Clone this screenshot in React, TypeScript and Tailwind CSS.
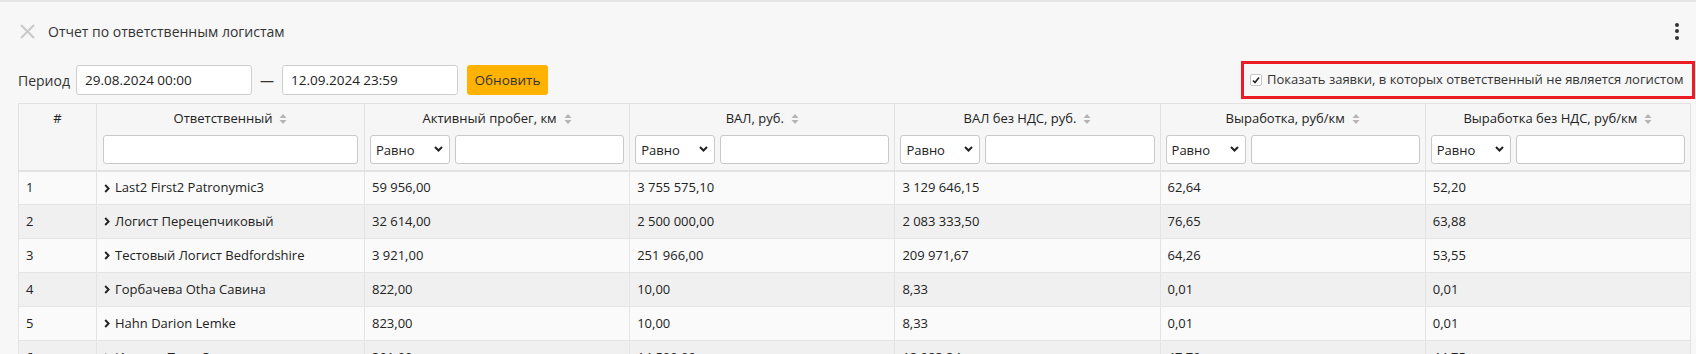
import React from "react";

const rows = [
  ["1", "Last2 First2 Patronymic3", "59 956,00", "3 755 575,10", "3 129 646,15", "62,64", "52,20"],
  ["2", "Логист Перецепчиковый", "32 614,00", "2 500 000,00", "2 083 333,50", "76,65", "63,88"],
  ["3", "Тестовый Логист Bedfordshire", "3 921,00", "251 966,00", "209 971,67", "64,26", "53,55"],
  ["4", "Горбачева Otha Савина", "822,00", "10,00", "8,33", "0,01", "0,01"],
  ["5", "Hahn Darion Lemke", "823,00", "10,00", "8,33", "0,01", "0,01"],
  ["6", "Иванов Петр Сергеевич", "391,00", "14 500,00", "12 083,34", "47,70", "44,75"],
];

const numCols = ["Активный пробег, км", "ВАЛ, руб.", "ВАЛ без НДС, руб.", "Выработка, руб/км", "Выработка без НДС, руб/км"];

function SortIcon() {
  return (
    <svg width="8" height="12" viewBox="0 0 8 12" className="inline-block ml-[7px] -mt-[2px]">
      <path d="M4 1 L7.5 5 H0.5 Z" fill="#b4b4b4" />
      <path d="M4 11 L7.5 7 H0.5 Z" fill="#b4b4b4" />
    </svg>
  );
}

function Chevron() {
  return (
    <svg width="6" height="9" viewBox="0 0 6 9" className="inline-block mr-[5px] -mt-[1px]">
      <path d="M1.2 1 L4.6 4.5 L1.2 8" stroke="#222" strokeWidth="1.9" fill="none" />
    </svg>
  );
}

function Filter() {
  return (
    <div className="flex gap-[5px] mt-[6px]">
      <div className="w-[80px] h-[29px] shrink-0 bg-white border border-[#c9c9c9] rounded-[3px] flex items-center justify-between pl-[5px] pr-[6px] text-[13px] font-normal text-[#222]">
        <span className="mt-[3px]">Равно</span>
        <svg width="9" height="6" viewBox="0 0 9 6">
          <path d="M1 1 L4.5 4.5 L8 1" stroke="#222" strokeWidth="2" fill="none" />
        </svg>
      </div>
      <div className="flex-1 h-[29px] bg-white border border-[#c9c9c9] rounded-[3px]" />
    </div>
  );
}

export default function App() {
  return (
    <div className="w-[1696px] h-[354px] overflow-hidden bg-[#f7f7f7] border-t-2 border-[#e4e4e4] font-['Open_Sans',sans-serif] text-[#222]">
      <div className="flex items-center h-[62px] pl-[20px] pr-[16px] -mt-[2px]">
        <svg width="15" height="15" viewBox="0 0 15 15" className="mr-[13px]">
          <path d="M1 1 L14 14 M14 1 L1 14" stroke="#c9c9c9" strokeWidth="2" />
        </svg>
        <span className="text-[14px] text-[#333]">Отчет по ответственным логистам</span>
        <div className="ml-auto flex flex-col gap-[2.5px] mr-[1px]">
          <span className="w-[4px] h-[4px] rounded-full bg-[#333]" />
          <span className="w-[4px] h-[4px] rounded-full bg-[#333]" />
          <span className="w-[4px] h-[4px] rounded-full bg-[#333]" />
        </div>
      </div>

      <div className="flex items-center h-[38px] pl-[18px] pr-[1px] -mt-[1px]">
        <span className="text-[14px] text-[#333] mr-[6px]">Период</span>
        <div className="w-[176px] h-[30px] bg-white border border-[#cfcfcf] rounded-[3px] flex items-center pl-[8px] text-[13.5px] text-[#222]">
          29.08.2024 00:00
        </div>
        <span className="mx-[8px] text-[14px] text-[#333]">—</span>
        <div className="w-[176px] h-[30px] bg-white border border-[#cfcfcf] rounded-[3px] flex items-center pl-[8px] text-[13.5px] text-[#222]">
          12.09.2024 23:59
        </div>
        <button className="ml-[9px] w-[81px] h-[30px] bg-[#ffb300] rounded-[3px] text-[13.5px] text-[#333]">
          Обновить
        </button>
        <div className="ml-auto h-[38px] w-[454px] border-[3px] border-[#ed1c24] flex items-center pl-[6px]">
          <span className="w-[12px] h-[12px] bg-white border border-[#c6c6c6] rounded-[2px] flex items-center justify-center mr-[5px]">
            <svg width="8" height="8" viewBox="0 0 8 8">
              <path d="M1 4.5 L3 6.5 L7 1.5" stroke="#222" strokeWidth="1.6" fill="none" />
            </svg>
          </span>
          <span className="text-[13px] text-[#333]">Показать заявки, в которых ответственный не является логистом</span>
        </div>
      </div>

      <div className="pl-[18px] pr-[5px] mt-[4px]">
        <table className="w-[1673px] table-fixed border-collapse text-[13px]">
          <colgroup>
            <col className="w-[78px]" />
            <col className="w-[268px]" />
            <col />
            <col />
            <col />
            <col />
            <col />
          </colgroup>
          <thead>
            <tr className="bg-[#f6f6f6]">
              <th className="border border-[#e2e2e2] border-b-2 align-top pt-[5px] h-[67px] font-normal text-[#222]">#</th>
              <th className="border border-[#e2e2e2] border-b-2 align-top pt-[5px] px-[6px] font-normal text-[#222]">
                <div>
                  Ответственный
                  <SortIcon />
                </div>
                <div className="mt-[6px] h-[29px] bg-white border border-[#c9c9c9] rounded-[3px]" />
              </th>
              {numCols.map((c) => (
                <th key={c} className="border border-[#e2e2e2] border-b-2 align-top pt-[5px] px-[5px] font-normal text-[#222]">
                  <div>
                    {c}
                    <SortIcon />
                  </div>
                  <Filter />
                </th>
              ))}
            </tr>
          </thead>
          <tbody>
            {rows.map((r, i) => (
              <tr key={r[0]} className={i % 2 === 0 ? "bg-[#fafafa]" : "bg-[#f0f0f0]"}>
                {r.map((v, j) => (
                  <td key={j} className="border border-[#e4e4e4] h-[34px] px-[7px] align-middle text-[#222]">
                    {j === 1 && <Chevron />}
                    {v}
                  </td>
                ))}
              </tr>
            ))}
          </tbody>
        </table>
      </div>
    </div>
  );
}
